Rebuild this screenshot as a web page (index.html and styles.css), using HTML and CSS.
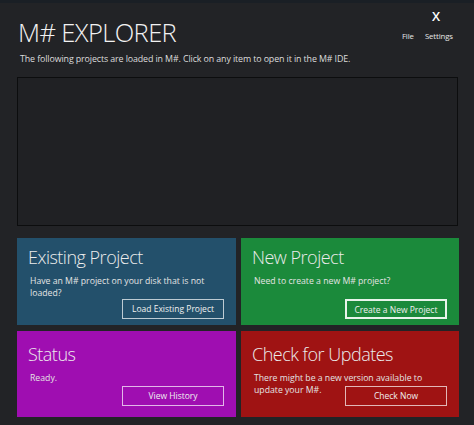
FILE: index.html
```html
<!DOCTYPE html>
<html>
<head>
<meta charset="utf-8">
<link rel="stylesheet" href="styles.css">
</head>
<body>
<div class="window">
  <header class="header">
    <div class="heading">
      <h1 class="title">M# EXPLORER</h1>
      <p class="subtitle">The following projects are loaded in M#. Click on any item to open it in the M# IDE.</p>
    </div>
    <div class="controls">
      <span class="close">X</span>
      <nav class="menu"><span>File</span><span>Settings</span></nav>
    </div>
  </header>
  <div class="list"></div>
  <div class="tiles">
    <section class="tile blue">
      <h2 class="tile-title">Existing Project</h2>
      <div class="tile-body">
        <p class="desc">Have an M# project on your disk that is not<br>loaded?</p>
        <button class="btn">Load Existing Project</button>
      </div>
    </section>
    <section class="tile green">
      <h2 class="tile-title">New Project</h2>
      <div class="tile-body">
        <p class="desc">Need to create a new M# project?</p>
        <button class="btn thick">Create a New Project</button>
      </div>
    </section>
    <section class="tile lower purple">
      <h2 class="tile-title">Status</h2>
      <div class="tile-body">
        <p class="desc">Ready.</p>
        <button class="btn">View History</button>
      </div>
    </section>
    <section class="tile lower red">
      <h2 class="tile-title">Check for Updates</h2>
      <div class="tile-body">
        <p class="desc">There might be a new version available to<br>update your M#.</p>
        <button class="btn">Check Now</button>
      </div>
    </section>
  </div>
</div>
</body>
</html>
```
FILE: styles.css
```css
html, body {
  margin: 0;
  padding: 0;
}
body {
  background: #222326;
  font-family: "Open Sans", "Noto Sans", sans-serif;
  color: #e6e6e6;
  width: 474px;
  height: 425px;
  overflow: hidden;
}
.window {
  border-top: 3px solid #1a1f25;
  padding: 0 15px 0 17px;
  box-sizing: border-box;
  height: 425px;
}
.header {
  display: flex;
  justify-content: space-between;
  height: 74px;
}
.heading {
  padding-left: 1px;
}
.title {
  margin: 13px 0 0 0;
  font-size: 25.5px;
  font-weight: 300;
  line-height: 32px;
  color: #f2f2f2;
  letter-spacing: -0.6px;
}
.subtitle {
  margin: 5px 0 0 2px;
  font-size: 8.9px;
  line-height: 12px;
  color: #dcdcdc;
  letter-spacing: -0.12px;
}
.controls {
  display: flex;
  flex-direction: column;
  align-items: flex-end;
  padding-top: 5px;
  padding-right: 6px;
}
.close {
  font-size: 13px;
  font-weight: 600;
  line-height: 16px;
  color: #ffffff;
  margin-right: 13px;
}
.menu {
  display: flex;
  gap: 11px;
  margin-top: 6px;
  font-size: 7.8px;
  line-height: 12px;
  color: #e8e8e8;
  letter-spacing: -0.1px;
}
.list {
  height: 147px;
  border: 1px solid #0c0d0e;
  background: #202124;
  margin-right: 1px;
}
.tiles {
  margin-top: 12px;
  display: grid;
  grid-template-columns: 219px 218px;
  grid-template-rows: 87px 86px;
  column-gap: 5px;
  row-gap: 6px;
}
.tile {
  display: flex;
  flex-direction: column;
  padding: 6px 12px 6px 11px;
  box-sizing: border-box;
}
.tile.lower {
  padding-top: 10px;
  padding-bottom: 11px;
}
.blue { background: #23506b; }
.green { background: #1b8a3b; }
.purple { background: #9f0eb1; }
.red { background: #9f1313; }
.tile-title {
  margin: 0;
  font-size: 18px;
  font-weight: 300;
  line-height: 26px;
  color: #ececec;
  letter-spacing: -0.5px;
}
.tile-body {
  flex: 1;
  display: grid;
  grid-template-areas: "cell";
}
.desc {
  grid-area: cell;
  align-self: start;
  margin: 6px 0 0 2px;
  font-size: 8.7px;
  line-height: 11.5px;
  color: #e4e4e4;
}
.btn {
  grid-area: cell;
  align-self: end;
  justify-self: end;
  width: 102px;
  height: 20px;
  padding: 0;
  background: transparent;
  border: 1px solid rgba(255, 255, 255, 0.7);
  color: #f0f0f0;
  font-family: "Open Sans", "Noto Sans", sans-serif;
  font-size: 8.5px;
  line-height: 18px;
}
.btn.thick {
  border: 2px solid rgba(255, 255, 255, 0.9);
}
```
